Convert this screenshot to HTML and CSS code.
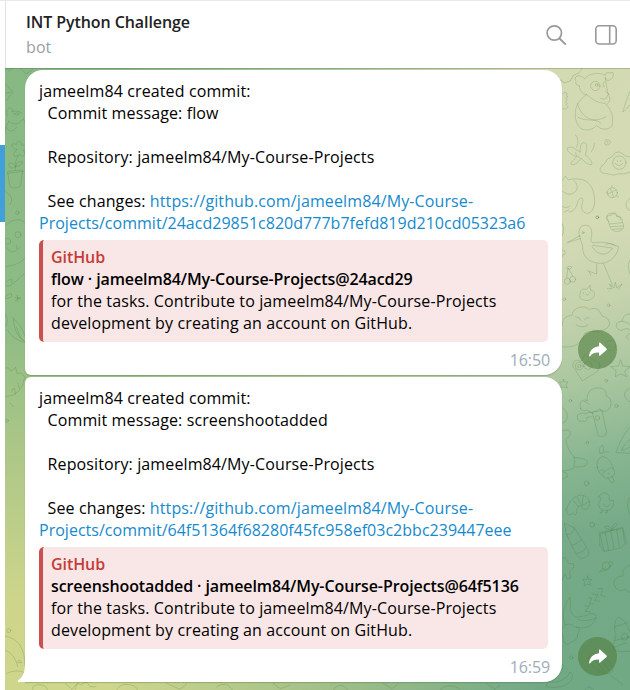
FILE: index.html
```html
<!DOCTYPE html>
<html lang="en">
<head>
<meta charset="utf-8">
<title>INT Python Challenge</title>
<link rel="stylesheet" href="styles.css">
</head>
<body>
<div class="app">
  <aside class="rail"><div class="rail-active"></div></aside>
  <main class="main">
    <header class="header">
      <div class="peer">
        <div class="peer-name">INT Python Challenge</div>
        <div class="peer-status">bot</div>
      </div>
      <div class="actions">
        <svg width="22" height="22" viewBox="0 0 22 22" fill="none" stroke="#999" stroke-width="1.7"><circle cx="9.300" cy="9" r="7.200"/><path d="M14.300 14.300l6.500 6.300" stroke-width="1.900"/></svg>
        <svg width="22" height="20" viewBox="0 0 22 20" fill="none" stroke="#999" stroke-width="1.6"><rect x=".8" y=".8" width="20.400" height="18.200" rx="3.500"/><path d="M14.700 1v18"/></svg>
      </div>
    </header>
    <section class="chat">
      <svg class="wallpaper" viewBox="5 68 625 622" preserveAspectRatio="none">
        <defs>
          <linearGradient id="lg" x1="0" y1="0" x2="0" y2="1"><stop offset="0" stop-color="#87b883"/><stop offset=".42" stop-color="#8fbc85"/><stop offset=".6" stop-color="#aac687"/><stop offset=".86" stop-color="#ced58b"/><stop offset="1" stop-color="#ced68c"/></linearGradient>
          <linearGradient id="rg" gradientUnits="userSpaceOnUse" x1="540" y1="68" x2="690" y2="650"><stop offset="0" stop-color="#d3dab2"/><stop offset=".27" stop-color="#d4dbb5"/><stop offset=".4" stop-color="#c6d3ad"/><stop offset=".53" stop-color="#a8c69f"/><stop offset=".66" stop-color="#86b590"/><stop offset=".77" stop-color="#76aa88"/><stop offset="1" stop-color="#72a985"/></linearGradient>
          <linearGradient id="fade"><stop offset=".18" stop-color="#000"/><stop offset=".85" stop-color="#fff"/></linearGradient>
          <mask id="m"><rect x="5" y="68" width="625" height="622" fill="url(#fade)"/></mask>
        </defs>
        <rect x="5" y="68" width="625" height="622" fill="url(#lg)"/>
        <rect x="5" y="68" width="625" height="622" fill="url(#rg)" mask="url(#m)"/>
        <g class="doodle">
          <g transform="translate(540 60) scale(.33333)">
            <path d="M15 30l12 14 22 20 16-4 6 9 20-6 8-16 18-8 10-14M118 78c-10-2-12-8-10-14-4-8-3-14 4-16 10-2 18 4 22 8 12-14 40-22 62-10 0-8 8-10 14-7l8-2c6 8-2 24-14 24-6 0-10-4-8-9M118 78c2 16 10 24 22 26-18 12-32 30-34 52-2 30 10 52 30 54 14 0 26-4 34-14 12 16 40 14 46 0 6-26-4-50-18-62 14-6 14-20 6-34-4-16-6-36-8-46M112 130c16 50 50 60 86 40M114 172c20 14 60 2 68 18M140 104c16 14 34 26 56 26M196 94l10 8-6 8M182 116q12 6 20-4"/>
            <circle cx="166" cy="78" r="14"/><circle cx="170" cy="75" r="4"/><path d="M192 64q-6 8 0 18M270 94c-8 20-16 40-22 62 8-4 16-14 22-22"/>
            <path d="M68 100q12-6 14 2-8 6 2 8-12 6-2 10-10 6 0 10-8 4 2 10-4 10-16 6M106 224q14 14 4 38M164 250q-2 14-10 26M120 276c0-18 4-30 12-28 12 0 8 22 4 38 14 8 24 24 18 28-10 0-22-8-30-20-10 12-18 22-28 20-10-4 8-16 14-24-16-6-32-18-28-26 10-8 26 4 38 12zM106 278q0 10 14 16M196 240q14-4 16 8-6 12-16 6-6-8 4-10 8 2 4 6"/>
            <path d="M270 290c-14 4-22-14-36-14-14 0-12 14-24 18-14 2-8 12-20 20-12 8-14 22 0 26 18 0 28 8 36 4 16-6 24 2 44-8"/><circle cx="238" cy="308" r="20"/><path d="M226 310q12 16 22 0M232 302v3M242 301v3"/>
            <path d="M66 362l10-14 8 12c30-8 66-4 76 36 8 30 4 50-10 62-14 6-30-4-24-26 8-18-2-24-12-10-2 18-14 34-26 34M66 394q28 20 44-4 6-16-8-28M68 440q14 6 22-2M86 450l-14 6"/>
            <circle cx="217" cy="398" r="15"/><path d="M210 386l6 10 12-6M204 402l12-6 4 14M198 396l6 4M230 408l6 3M216 382v-5M270 415q-26 20 0 38M204 480q-10-20 10-20 16-4 18 8 14 0 8 12"/><circle cx="172" cy="472" r="4"/>
          </g>
          <g transform="translate(540 210) scale(.33333)">
            <circle cx="172" cy="22" r="4"/><path d="M206 34c-14-8-6-20 8-18 2-8 16-6 16 4 12-2 20 8 16 14 12 20 0 30-14 30-14 2-26-14-26-30zM210 42l36-4M212 50l38-2M218 58l28-2"/>
            <path d="M118 78l-36 20 38-12M118 78c-4-18 2-32 16-32 18-2 24 14 20 34-4 16 2 20 14 18 20-4 40 0 68 12-4 26-24 48-52 50-34 0-58-18-56-52-2-10-8-16-8-30zM156 110c18 30 48 28 62 4l-60-8M196 104c8-6 24-2 30 4M190 160l28 66M170 162v30l-28-10M148 186l4 10M202 236l14 0-8-14 14 12 4-18 4 18 16-12-10 16"/>
            <circle cx="129" cy="68" r="3"/><circle cx="82" cy="214" r="9"/><circle cx="98" cy="208" r="9"/><path d="M80 204l4-30 14 24M80 172q10-8 16 0-6 10-14 4M120 252q0-20 20-14l10-12 2 14q16 4 10 20-20 22-42 4zM130 248v3M150 246v3M138 254q4 4 8-1"/>
            <circle cx="73" cy="268" r="4"/><circle cx="206" cy="286" r="4"/><path d="M66 350c0-28 16-32 30-34 4-28 38-30 52-18 28-10 32 10 38 20 32 8 24 36 8 40-22 14-40 0-60 12-6 30-34 46-68 40M106 320q14 2 18 12M108 344q20 14 36 0M134 330q6-12 14-6M196 400q20-18 30 0 4 18-12 22-16 0-12-12 8-8 12 0"/>
            <path d="M270 312c-20 0-20 12-24 22-24 0-20 24-6 26 14 4 14-12 30 0M246 334q18 2 24 10M270 370q-18 8-4 20M270 150q-10 20 0 42M66 40q10 15 0 38M66 120q14 0 8 14-8-2-8 8"/>
          </g>
          <g transform="translate(540 360) scale(.33333)">
            <path d="M98 16q4-24 26-12l10-22 44 28q6 16-12 28l-38 24zM242 0l6 18 22 2-16 14 6 16-18-8-16 8 2-18-16-12 22-2zM70 58l4 8 10 0-6 8 4 10-10-4-10 4 2-10-6-8h10z"/><circle cx="118" cy="18" r="12"/><circle cx="144" cy="16" r="12"/><circle cx="118" cy="18" r="5"/><circle cx="199" cy="62" r="4"/><circle cx="91" cy="122" r="4"/><circle cx="229" cy="138" r="5"/><circle cx="142" cy="248" r="4"/><circle cx="140" cy="370" r="7"/>
            <path d="M122 146c-8-20 6-30 20-24-4-22 10-38 30-38 22 0 28 10 26 24 20 6 18 32 6 42-8 10-24 0-24-4-12 8-30 18-38 4-8 4-16 2-20-4zM132 124q12 2 16 10M158 156l28-4 14 66q-4 16-24 10zM158 160c-10-10-18 2-22 2-10-6-24 0-24 8 0 12 8 18 16 12 6 6 16 0 12-10l16-2M270 84q-24 14-14 30l14 12M270 202c-16 14-34 50-42 76l42 2M270 238q-20 16-26 34l26-10"/><circle cx="172" cy="174" r="7"/>
            <path d="M66 142q20 14 16 32-6 16-16 16M66 212c12-4 30-4 24 12-2 12-16 10-12 18 4 24 18 44 26 50 18 4 40 4 38 16-2 14-24 14-36 12-12 10-24 12-40 12M66 336q20 0 16 14l-16 8M102 290q6 12 0 28M180 280c-6-12 0-20 8-24 4 14 6 24-8 24M188 280q10-10 18-4M172 322c-4-20 6-32 18-32 18 4 30 26 34 50-2 12-16 14-26 14-16-8-24-20-26-32zM178 334q10-12 14 2 14-12 12-8 10-10 14-2M204 354l10 14q8 2 8-6l-6-14M190 338v4M206 338v4"/>
            <path d="M80 446c8-28 34-48 54-38 16 8 18 24 12 34-6 10-18 6-22-2-8-6-12 2-14 12 2 12-6 16-12 8-10 10-22 2-14-6-8 0-8-8-4-8zM100 422l16 18M112 412l12 24M130 408l-4 28M148 424l-20 12M180 412l-6-2 8-6c4-8 24-6 26 6-2 10 2 16 12 10 4 18-6 34-24 32-16 0-24-16-18-26q8-6 2-14M190 432q8 16 18 2M186 450v8h-6M202 450v8h-6M270 412q-16 20 0 50"/>
          </g>
          <g transform="translate(540 520) scale(.33333)">
            <path d="M74 10l30 14 40 66c8 14-6 26-22 24-8-2-12-10-16-16L80 44zM80 44q18 0 24-20M96 76q16-2 28-18M110 100q20-2 28-18M180 42l68-20 12 46-18 16-50 10-12-16zM180 42l12 52M178 38l66-12M196 38l10 52M212 34l10 50M230 30l8 50M248 26l6 44M216 28c-20-24-36 2 0 0 4-30 32-20 0 0"/><circle cx="157" cy="14" r="7"/><circle cx="199" cy="138" r="12"/><path d="M190 146c-28 18 0 10 18-4 18-18 8-22-2-14M66 116l10-4 8 18 18 2-2 12-12 10 4 20-10 2-8-14-8 20M142 168l4 10 10 0-8 8 4 10-10-4-10 6 2-12-6-8h12zM146 234l10 0-8 18 12 0M134 258l14 0-12 16 16 2M158 222l16 2-10 18 16 2M174 206l14 0-6 20 14 4"/>
            <path d="M90 232c-24 30-24 60-14 84 6-6 20-4 26 4 20-2 18 16 10 22 4 20-14 20-20 26-14 14-26-4-22-16-10-16-4-30 6-36M90 232c6 20-8 46 18 60 18-4 30-2 40-10 12-2 22 0 20 12-12 32-40 32-58 28M112 298q20 10 56-4M270 136c-20 4-24 20-20 32-24-2-34 18-24 34 10 14 20 10 28 6l16 10M226 338c-6-24 0-40 10-46 20 8 26 24 34 44M226 320l38-12M228 340c0 20-12 30-10 44l16 10 36 0M224 362l46-12M220 382l40-14"/><circle cx="254" cy="350" r="10"/><circle cx="94" cy="413" r="5"/><path d="M66 340q-6 20 0 40M90 458c8-4 10 10 4 22-14 20-40 26-76 20l6-14c30 4 50-4 66-28M148 412c4-20 20-10 28-2 28 4 46 24 42 44-16 16-42 0-54-12-12-8-20-18-16-30M160 414l40 48M174 410l36 44M212 466l36 28M134 510l12-10 14 8M66 450q8-16 0-20"/>
          </g>
          <g transform="translate(0 130) scale(.33333)">
            <path d="M50 58c-24-8-16-22 0-14-2-14 18-14 14 2 20-6 20 14 6 14 12 16-6 26-12 12-14 16-26 4-8-14zM54 76q-12 20-8 44M24 124l44-4-6 46q-20 16-32 2zM22 130l48-6M48 110q-20-22-22-4 4 14 22 4 2-20 20-14-4 12-20 14M15 184q32 20 15 40M15 288c20-20 44-26 60-10M15 410c30-4 50-12 60-26M18 350q14 30 40 4M50 346v10"/><circle cx="52" cy="248" r="5"/><circle cx="54" cy="314" r="9"/><circle cx="23" cy="334" r="9"/><path d="M15 460q24-24 20-4 8 14-20 12M15 500q24-18 20-4 4 8-20 10M40 460l35-30M52 496l2 18M45 502l18 4M46 512l14-10M40 564q0 50 35 72M40 564q30 30 35 56M50 592q10 36 25 44M15 550q14 18 2 40"/>
          </g>
          <g transform="translate(0 60) scale(.33333)"><path d="M15 24l14 8 12-8M62 24l16 18 20-14M15 70l24 26-20 26M15 100l18-4M22 168q-8-26 10-24 8 4 4 12 14-8 30 4M26 184q24 20 44-8l5 12M26 184q-12 20-11 36M42 162q12-8 16 0-8 8-16 0M50 202q-20 24-30 0"/></g>
          <g transform="translate(0 330) scale(.33333)"><path d="M22 0q20 30 52 38M15 114q14-4 18 10l14-12 4 18q18-4 20 8M15 200q50 0 60-60M36 184q0-10 8-8l2 18M54 160l4 14M30 218l10 12"/><circle cx="20" cy="272" r="5"/></g>
          <g transform="translate(0 600) scale(.33333)"><path d="M15 108q60 10 60 90M15 150q30 10 38 50M20 220q30-14 54-2M54 188h12l-8-8zM98 268q-4-14 20-14 24 2 24 16M196 250l20 18 16-18M226 268q4-26 16-14l18-8 10 14 18 0M350 270q10-22 40-16 20 4 22 16M500 250l40 18 20-16M650 260q30-20 48 10M820 250l20 16 30-10M1000 270q20-30 44 0M1150 250l26 16 18-14M1320 270q20-24 60-4M1460 250l24 18 16-12"/><circle cx="26" cy="92" r="6"/></g>
        </g>
      </svg>
      <div class="shade"></div>
      <article class="row">
        <div class="bubble first">
          <div class="text">
            <div>jameelm84 created commit:</div>
            <div>  Commit message: flow</div>
            <div class="gap">  Repository: jameelm84/My-Course-Projects</div>
            <div class="gap">  See changes: <a>https://github.com/jameelm84/My-Course-</a></div>
            <div class="hash"><a>Projects/commit/24acd29851c820d777b7fefd819d210cd05323a6</a></div>
          </div>
          <div class="preview">
            <div class="site">GitHub</div>
            <div class="title">flow · jameelm84/My-Course-Projects@24acd29</div>
            <div>for the tasks. Contribute to jameelm84/My-Course-Projects development by creating an account on GitHub.</div>
          </div>
          <time class="time">16:50</time>
        </div>
        <div class="share"><svg width="18" height="16" viewBox="0 0 18 18" preserveAspectRatio="none"><path d="M10 1.200q.2-1.200 1.200-.4l6.300 6.500q.8.900 0 1.700L11.200 15.200q-1 .8-1.200-.4v-3C6 11.700 3.500 12.300 1.200 16q-1 1-1.100-.6C.7 9.500 4 5.500 10 4.700z" fill="#fff"/></svg></div>
      </article>
      <article class="row">
        <div class="bubble last">
          <div class="text">
            <div>jameelm84 created commit:</div>
            <div>  Commit message: screenshootadded</div>
            <div class="gap">  Repository: jameelm84/My-Course-Projects</div>
            <div class="gap">  See changes: <a>https://github.com/jameelm84/My-Course-</a></div>
            <div class="hash"><a>Projects/commit/64f51364f68280f45fc958ef03c2bbc239447eee</a></div>
          </div>
          <div class="preview">
            <div class="site">GitHub</div>
            <div class="title">screenshootadded · jameelm84/My-Course-Projects@64f5136</div>
            <div>for the tasks. Contribute to jameelm84/My-Course-Projects development by creating an account on GitHub.</div>
          </div>
          <time class="time">16:59</time>
          <svg class="tail" width="9" height="20" viewBox="0 0 9 20"><path d="M9 0H8C8 9 7 14 1 18.500Q0 20 2 20H9z" fill="#fff"/></svg>
        </div>
        <div class="share"><svg width="18" height="16" viewBox="0 0 18 18" preserveAspectRatio="none"><path d="M10 1.200q.2-1.200 1.200-.4l6.300 6.500q.8.900 0 1.700L11.200 15.200q-1 .8-1.200-.4v-3C6 11.700 3.500 12.300 1.200 16q-1 1-1.100-.6C.7 9.500 4 5.500 10 4.700z" fill="#fff"/></svg></div>
      </article>
    </section>
  </main>
</div>
</body>
</html>
```
FILE: styles.css
```css
* { box-sizing: border-box; }
body { margin: 0; font: 16px/22px "Open Sans", sans-serif; color: #000; background: #fff; }
.app { display: flex; width: 630px; height: 690px; overflow: hidden; border-top: 1px solid #e9e9e9; }
.rail { width: 5px; padding-top: 144px; }
.rail-active { height: 77px; background: #419fd9; }
.main { flex: 1; display: flex; flex-direction: column; min-width: 0; }
.header { height: 67px; padding: 0 13px 0 20px; display: flex; justify-content: space-between; border-left: 1px solid #e3e3e3; }
.peer { padding-top: 10px; }
.peer-name { font-weight: 600; color: #222; line-height: 22px; letter-spacing: -.08px; }
.peer-status { color: #999fa8; line-height: 28px; letter-spacing: .1px; }
.actions { display: flex; gap: 28px; align-items: center; }
.chat { flex: 1; position: relative; padding: 2px 0 0 20px; display: flex; flex-direction: column; gap: 2px; overflow: hidden; }
.wallpaper { position: absolute; left: 0; top: 0; width: 625px; height: 622px; }
.doodle { fill: none; stroke: #346b2c; stroke-opacity: .2; stroke-width: 3; stroke-linejoin: round; stroke-linecap: round; }
.shade { position: absolute; left: 0; top: 0; width: 100%; height: 1px; background: rgba(70, 90, 60, .28); }
.row { position: relative; display: flex; align-items: flex-end; gap: 16px; }
.bubble { position: relative; width: 537px; height: 305px; padding: 10px 14px 0; background: #fff; box-shadow: 0 1px 1px rgba(70, 110, 60, .35); letter-spacing: .12px; }
.first { border-radius: 18px 18px 18px 6px; }
.last { border-radius: 6px 18px 18px 0; }
.text { height: 154px; }
.text div { white-space: pre; }
.text .gap { margin-top: 22px; }
.text .hash { letter-spacing: .02px; }
.text a { color: #168acd; }
.preview { margin-top: 6px; width: 509px; height: 102px; padding: 6px 30px 8px 8px; background: #f8e7e6; border-left: 4px solid #c9504c; border-radius: 5px; }
.site { color: #c53b37; font-weight: 600; letter-spacing: -.08px; }
.title { font-weight: 600; white-space: nowrap; letter-spacing: -.09px; }
.time { display: block; margin: 7px -2px 0 0; text-align: right; color: #a0acb6; letter-spacing: -.1px; }
.tail { position: absolute; left: -8px; bottom: 0; }
.share { width: 39px; height: 39px; margin-bottom: 6px; border-radius: 50%; background: rgba(83, 128, 65, .62); display: flex; align-items: center; justify-content: center; position: relative; }
```
